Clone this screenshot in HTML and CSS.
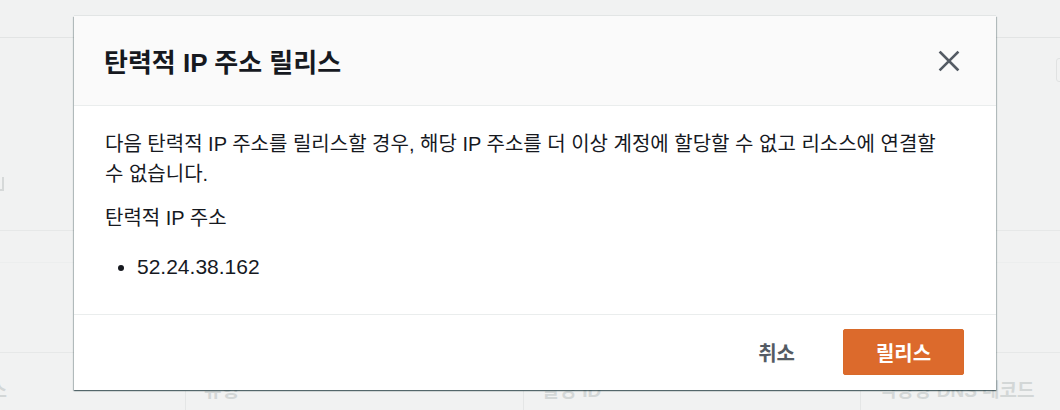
FILE: index.html
```html
<!DOCTYPE html>
<html lang="ko">
<head>
<meta charset="utf-8">
<title>탄력적 IP 주소 릴리스</title>
<link rel="stylesheet" href="styles.css">
</head>
<body>
<div class="page">
  <div class="topbar"></div>
  <div class="toolbar"><span class="tool-btn"></span></div>
  <div class="frag-row"><span class="frag"></span></div>
  <div class="rule"></div>
  <div class="rule faint"></div>
  <div class="spacer"></div>
  <div class="table-head">
    <div class="th first">주소</div>
    <div class="th">유형</div>
    <div class="th">할당 ID</div>
    <div class="th">역방향 DNS 레코드</div>
  </div>
</div>

<div class="modal" role="dialog">
  <div class="modal-header">
    <h2 class="modal-title">탄력적 IP 주소 릴리스</h2>
    <button class="close-btn" aria-label="닫기">
      <svg width="22" height="22" viewBox="0 0 22 22"><path d="M2.5 2.5 L19.5 19.5 M19.5 2.5 L2.5 19.5" stroke="#545b64" stroke-width="2.6" stroke-linecap="square" fill="none"/></svg>
    </button>
  </div>
  <div class="modal-body">
    <p class="desc">다음 탄력적 IP 주소를 릴리스할 경우, 해당 IP 주소를 더 이상 계정에 할당할 수 없고 리소스에 연결할 수 없습니다.</p>
    <p class="label">탄력적 IP 주소</p>
    <ul class="ip-list">
      <li>52.24.38.162</li>
    </ul>
  </div>
  <div class="modal-footer">
    <button class="btn-link">취소</button>
    <button class="btn-primary">릴리스</button>
  </div>
</div>
</body>
</html>
```
FILE: styles.css
```css
html, body {
  margin: 0;
  padding: 0;
}
body {
  width: 1060px;
  height: 410px;
  overflow: hidden;
  background: #f1f2f2;
  font-family: "Liberation Sans", "Noto Sans CJK KR", sans-serif;
  color: #16191f;
  position: relative;
  word-break: keep-all;
}

/* background page (dimmed) */
.page {
  display: flex;
  flex-direction: column;
}
.topbar {
  height: 37px;
  border-bottom: 1px solid #e2e4e4;
}
.toolbar {
  height: 44px;
  display: flex;
  justify-content: flex-end;
  align-items: flex-end;
  overflow: hidden;
}
.tool-btn {
  width: 20px;
  height: 24px;
  margin-right: -16px;
  border: 1px solid #e0e2e2;
  border-radius: 3px;
  box-sizing: border-box;
}
.frag-row {
  height: 148px;
  overflow: hidden;
}
.frag {
  display: block;
  margin-top: 95px;
  width: 4px;
  height: 14px;
  border-right: 2px solid #d6d9d9;
  border-bottom: 2px solid #d6d9d9;
  box-sizing: border-box;
}
.rule {
  height: 0;
  border-top: 1px solid #e6e8e8;
}
.rule.faint {
  margin-top: 31px;
  border-top-color: #eceeee;
}
.spacer {
  height: 89px;
}
.table-head {
  border-top: 1px solid #e6e8e8;
  display: grid;
  grid-template-columns: 185px 338px 337px 337px;
  height: 60px;
}
.th {
  font-size: 19px;
  font-weight: 700;
  color: #d3d7d7;
  padding: 22px 0 0 19px;
  white-space: nowrap;
  position: relative;
}
.th::before {
  content: "";
  position: absolute;
  left: 0;
  top: 38px;
  bottom: 0;
  border-left: 1px solid #e4e6e6;
}
.th.first {
  padding-left: 0;
  margin-left: -28px;
}
.th.first::before {
  display: none;
}

/* modal */
.modal {
  position: absolute;
  left: 74px;
  top: 16px;
  width: 922px;
  background: #ffffff;
  box-shadow: 0 1px 1px 0 rgba(0, 28, 36, 0.45), 1px 1px 1px 0 rgba(0, 28, 36, 0.2), -1px 1px 1px 0 rgba(0, 28, 36, 0.2), 0 -1px 0 0 rgba(0, 28, 36, 0.06);
}
.modal-header {
  height: 90px;
  box-sizing: border-box;
  background: #fafafa;
  border-bottom: 1px solid #eaeded;
  display: flex;
  align-items: center;
  justify-content: space-between;
  padding: 0 36px 0 30px;
}
.modal-title {
  margin: 0;
  font-size: 26px;
  font-weight: 700;
  color: #16191f;
}
.close-btn {
  border: none;
  background: none;
  padding: 0;
  width: 22px;
  height: 22px;
  display: flex;
  align-items: center;
  justify-content: center;
  cursor: pointer;
}
.modal-body {
  padding: 23px 48px 32px 31px;
  border-bottom: 1px solid #eaeded;
}
.desc {
  margin: 0;
  font-size: 20px;
  line-height: 30px;
}
.label {
  margin: 14px 0 0;
  font-size: 20px;
  line-height: 30px;
}
.ip-list {
  margin: 19px 0 0;
  padding-left: 32px;
  font-size: 21px;
  line-height: 30px;
}
.modal-footer {
  display: flex;
  justify-content: flex-end;
  align-items: center;
  padding: 14px 32px 15px;
  gap: 28px;
}
.btn-link {
  border: none;
  background: none;
  font-family: inherit;
  font-size: 20px;
  font-weight: 700;
  color: #545b64;
  padding: 0 20px;
  height: 46px;
}
.btn-primary {
  border: 1px solid #d86a2a;
  background: #dc6a2c;
  color: #ffffff;
  font-family: inherit;
  font-size: 20px;
  font-weight: 700;
  border-radius: 2px;
  width: 121px;
  height: 46px;
}
```
